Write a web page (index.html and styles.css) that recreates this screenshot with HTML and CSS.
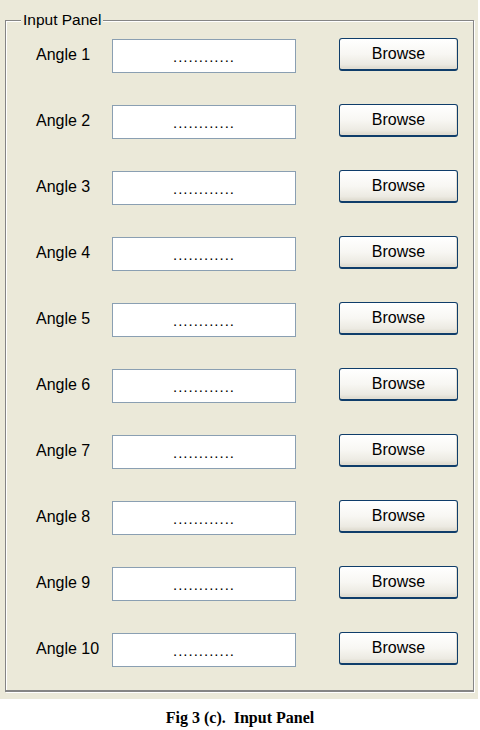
FILE: index.html
```html
<!DOCTYPE html>
<html lang="en">
<head>
    <meta charset="UTF-8">
    <meta name="viewport" content="width=device-width, initial-scale=1.0">
    <title>Input Panel</title>
    <link rel="stylesheet" href="styles.css">
</head>
<body>
    <div class="window">
        <fieldset class="panel">
            <legend>Input Panel</legend>
            <div class="rows">
                <div class="row"><span class="label">Angle 1</span><div class="field">............</div><button class="browse">Browse</button></div>
                <div class="row"><span class="label">Angle 2</span><div class="field">............</div><button class="browse">Browse</button></div>
                <div class="row"><span class="label">Angle 3</span><div class="field">............</div><button class="browse">Browse</button></div>
                <div class="row"><span class="label">Angle 4</span><div class="field">............</div><button class="browse">Browse</button></div>
                <div class="row"><span class="label">Angle 5</span><div class="field">............</div><button class="browse">Browse</button></div>
                <div class="row"><span class="label">Angle 6</span><div class="field">............</div><button class="browse">Browse</button></div>
                <div class="row"><span class="label">Angle 7</span><div class="field">............</div><button class="browse">Browse</button></div>
                <div class="row"><span class="label">Angle 8</span><div class="field">............</div><button class="browse">Browse</button></div>
                <div class="row"><span class="label">Angle 9</span><div class="field">............</div><button class="browse">Browse</button></div>
                <div class="row"><span class="label">Angle 10</span><div class="field">............</div><button class="browse">Browse</button></div>
            </div>
        </fieldset>
    </div>
    <p class="caption">Fig 3 (c).&nbsp; Input Panel</p>
</body>
</html>
```

FILE: styles.css
```css
body {
    margin: 0;
    padding: 0;
    background-color: #fff;
    font-family: "Liberation Sans", Arial, sans-serif;
    color: #000;
}
.window {
    width: 478px;
    height: 699px;
    background-color: #ebe9d9;
    padding: 11px 0 0 0;
    box-sizing: border-box;
}
.panel {
    margin: 0 0 0 5px;
    padding: 0;
    width: 469px;
    height: 681px;
    box-sizing: border-box;
    border: 1px solid #858585;
    border-bottom-width: 2px;
    box-shadow: inset 1px 1px 0 #fff, 1px 1px 0 #fff;
}
.panel legend {
    margin-left: 15px;
    padding: 0 2px;
    font-size: 15.5px;
    line-height: 18px;
    background-color: #ebe9d9;
}
.rows {
    display: flex;
    flex-direction: column;
    gap: 32px;
    padding: 9px 0 0 30px;
}
.row {
    display: grid;
    grid-template-columns: 76px 184px 162px;
    align-items: center;
    height: 34px;
}
.label {
    font-size: 16px;
    margin-top: -2px;
}
.field {
    height: 34px;
    box-sizing: border-box;
    border: 1px solid #8a9fb2;
    background-color: #fff;
    text-align: center;
    font-size: 15px;
    line-height: 34px;
    letter-spacing: 1px;
}
.browse {
    width: 119px;
    height: 33px;
    margin: 0 0 3px 43px;
    padding: 0;
    font-family: "Liberation Sans", Arial, sans-serif;
    font-size: 16px;
    color: #000;
    border: 1px solid #0f3d6a;
    border-bottom-width: 2px;
    border-radius: 3px;
    background: linear-gradient(#ffffff 0%, #f8f7f3 50%, #eceae2 85%, #dcd8cc 100%);
    box-shadow: inset -1px -1px 0 #e2ded3;
}
.caption {
    margin: 10px 0 0 0;
    text-align: center;
    font-family: "Liberation Serif", "Times New Roman", serif;
    font-weight: bold;
    font-size: 16px;
}
```
